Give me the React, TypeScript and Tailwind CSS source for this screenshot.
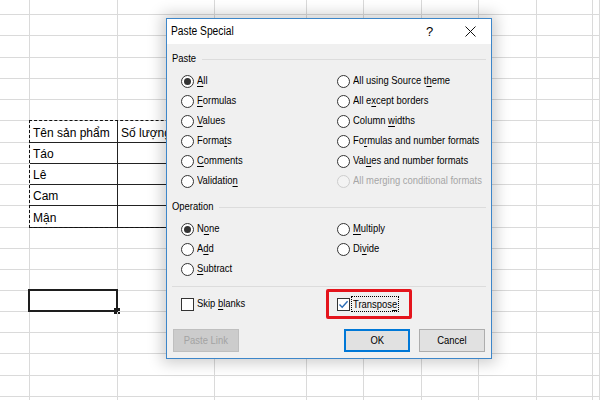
import type { ReactNode } from 'react';

const colW = [
  'w-[30px]',
  'w-[88px]',
  'w-[97px]',
  'w-[92px]',
  'w-[57px]',
  'w-[58px]',
  'w-[57px]',
  'w-[58px]',
  'w-[56px]',
  'flex-1',
];

const rowH = [
  'h-[15px]', 'h-[21px]', 'h-[22px]', 'h-[21px]', 'h-[21px]', 'h-[21px]',
  'h-[22px]', 'h-[21px]', 'h-[21px]', 'h-[21px]', 'h-[22px]', 'h-[21px]',
  'h-[21px]', 'h-[21px]', 'h-[21px]', 'h-[21px]', 'h-[21px]', 'h-[22px]',
  'h-[21px]', 'h-[10px]',
];

// rows 6..10 hold the copied range
const tableRows: Record<number, string> = {
  6: 'Tên sản phẩm',
  7: 'Táo',
  8: 'Lê',
  9: 'Cam',
  10: 'Mận',
};

// dialog text is squeezed like Segoe UI in the screenshot
function Txt({ children, center }: { children: ReactNode; center?: boolean }) {
  return (
    <span
      className={`inline-block whitespace-nowrap scale-x-[0.82] ${center ? 'origin-center' : 'origin-left'}`}
    >
      {children}
    </span>
  );
}

function Acc({ t, k }: { t: string; k: number }) {
  return (
    <Txt>
      {t.slice(0, k)}
      <span className="underline underline-offset-[2px]">{t[k]}</span>
      {t.slice(k + 1)}
    </Txt>
  );
}

function Radio({ checked, disabled }: { checked?: boolean; disabled?: boolean }) {
  return (
    <span
      className={`flex h-[13px] w-[13px] shrink-0 items-center justify-center rounded-full border ${
        disabled ? 'border-[#cdcdcd] bg-[#f3f3f3]' : 'border-[#333] bg-white'
      }`}
    >
      {checked && <span className="h-[7px] w-[7px] rounded-full bg-[#333]" />}
    </span>
  );
}

function RadioRow({ label, checked, disabled }: { label: ReactNode; checked?: boolean; disabled?: boolean }) {
  return (
    <div className={`flex h-[20px] items-center gap-[3px] ${disabled ? 'text-[#a6a6a6]' : 'text-black'}`}>
      <Radio checked={checked} disabled={disabled} />
      {label}
    </div>
  );
}

function GroupLabel({ text, w }: { text: string; w: string }) {
  return (
    <div className="flex h-[16px] items-center pr-[5px]">
      <span className={`text-black ${w}`}>
        <Txt>{text}</Txt>
      </span>
      <div className="ml-[4px] h-px flex-1 bg-[#dcdcdc]" />
    </div>
  );
}

function Checkbox({ checked }: { checked?: boolean }) {
  return (
    <span className="flex h-[13px] w-[13px] shrink-0 items-center justify-center border border-[#333] bg-white">
      {checked && (
        <svg width="11" height="11" viewBox="0 0 11 11">
          <path d="M1.5 5.5 L4.2 8.3 L9.6 2.2" fill="none" stroke="#2b6cb6" strokeWidth="1.4" />
        </svg>
      )}
    </span>
  );
}

function Sheet() {
  return (
    <div className="flex flex-col font-['Liberation_Sans',sans-serif] text-[12px] text-black">
      {rowH.map((h, r) => (
        <div key={r} className={`flex ${h}`}>
          {colW.map((w, c) => {
            const inRange = r >= 6 && r <= 10 && (c === 1 || c === 2);
            const text = c === 1 ? tableRows[r] : c === 2 && r === 6 ? 'Số lượng' : undefined;
            const selected = r === 14 && c === 1;
            return (
              <div
                key={c}
                className={`relative flex items-end px-[3px] pb-[1px] ${w} ${
                  inRange ? 'border-b border-r border-b-[#222] border-r-[#222]' : 'border-b border-r border-[#dadada]'
                }`}
              >
                {text && <span className="leading-[16px] whitespace-nowrap">{text}</span>}
                {selected && (
                  <div className="absolute -left-[2px] -top-[2px] -right-[1px] -bottom-[1px] border-2 border-[#1e1e1e]">
                    <div className="absolute -bottom-[4px] -right-[4px] h-[6px] w-[6px] bg-[#1e1e1e]" />
                  </div>
                )}
              </div>
            );
          })}
        </div>
      ))}
    </div>
  );
}

function Dialog() {
  return (
    <div className="absolute left-[166px] top-[18px] flex h-[341px] w-[326px] flex-col border border-[#3d86c9] bg-[#f0f0f0] font-['Liberation_Sans',sans-serif] text-[11.5px] shadow-[0_0_14px_4px_rgba(0,0,0,0.2)]">
      <div className="flex h-[25px] items-center bg-white">
        <span className="flex-1 pl-[4px] text-[12.5px] text-black">
          <Txt>Paste Special</Txt>
        </span>
        <span className="flex w-[41px] justify-center text-[13px] text-black">?</span>
        <span className="flex w-[41px] justify-center">
          <svg width="11" height="11" viewBox="0 0 11 11">
            <path d="M0.5 0.5 L10.5 10.5 M10.5 0.5 L0.5 10.5" stroke="#111" strokeWidth="1" />
          </svg>
        </span>
      </div>

      <div className="flex flex-col pl-[5px] pt-[7px]">
        <GroupLabel text="Paste" w="w-[26px]" />
        <div className="mt-[4px] grid grid-cols-[156px_1fr] pl-[9px]">
          <div className="flex flex-col">
            <RadioRow checked label={<Acc t="All" k={0} />} />
            <RadioRow label={<Acc t="Formulas" k={0} />} />
            <RadioRow label={<Acc t="Values" k={0} />} />
            <RadioRow label={<Acc t="Formats" k={5} />} />
            <RadioRow label={<Acc t="Comments" k={0} />} />
            <RadioRow label={<Acc t="Validation" k={9} />} />
          </div>
          <div className="flex flex-col">
            <RadioRow label={<Acc t="All using Source theme" k={18} />} />
            <RadioRow label={<Acc t="All except borders" k={5} />} />
            <RadioRow label={<Acc t="Column widths" k={7} />} />
            <RadioRow label={<Acc t="Formulas and number formats" k={2} />} />
            <RadioRow label={<Acc t="Values and number formats" k={3} />} />
            <RadioRow disabled label={<Txt>All merging conditional formats</Txt>} />
          </div>
        </div>

        <div className="mt-[8px]">
          <GroupLabel text="Operation" w="w-[43px]" />
        </div>
        <div className="mt-[4px] grid grid-cols-[156px_1fr] pl-[9px]">
          <div className="flex flex-col">
            <RadioRow checked label={<Acc t="None" k={1} />} />
            <RadioRow label={<Acc t="Add" k={1} />} />
            <RadioRow label={<Acc t="Subtract" k={0} />} />
          </div>
          <div className="flex flex-col">
            <RadioRow label={<Acc t="Multiply" k={0} />} />
            <RadioRow label={<Acc t="Divide" k={2} />} />
          </div>
        </div>

        <div className="mr-[5px] mt-[7px] h-px bg-[#dcdcdc]" />

        <div className="mt-[2px] grid h-[30px] grid-cols-[156px_1fr] pl-[9px]">
          <div className="flex items-center gap-[3px]">
            <Checkbox />
            <Acc t="Skip blanks" k={5} />
          </div>
          <div className="relative flex items-center gap-[1px]">
            <Checkbox checked />
            <span className="w-[48px] overflow-visible border border-dotted border-black pl-[1px] leading-[14px]">
              <Acc t="Transpose" k={8} />
            </span>
            <div className="pointer-events-none absolute -left-[11px] top-0 h-[30px] w-[86px] rounded-[2px] border-[3px] border-[#e4141c]" />
          </div>
        </div>

        <div className="mt-[10px] flex h-[23px] pr-[6px]">
          <div className="ml-[1px] flex w-[66px] items-center justify-center border border-[#bfbfbf] bg-[#cccccc] text-[#a3a3a3]">
            <Txt center>Paste Link</Txt>
          </div>
          <div className="flex-1" />
          <div className="flex w-[66px] items-center justify-center border-2 border-[#0078d7] bg-[#e1e1e1] text-black">
            <Txt center>OK</Txt>
          </div>
          <div className="ml-[9px] flex w-[66px] items-center justify-center border border-[#adadad] bg-[#e1e1e1] text-black">
            <Txt center>Cancel</Txt>
          </div>
        </div>
      </div>
    </div>
  );
}

export default function App() {
  return (
    <div className="relative h-[400px] w-[600px] overflow-hidden bg-white">
      <Sheet />
      {/* copy marquee */}
      <div className="pointer-events-none absolute left-[29px] top-[120px] h-[108px] w-[160px] border border-dashed border-[#111]" />
      <Dialog />
    </div>
  );
}
